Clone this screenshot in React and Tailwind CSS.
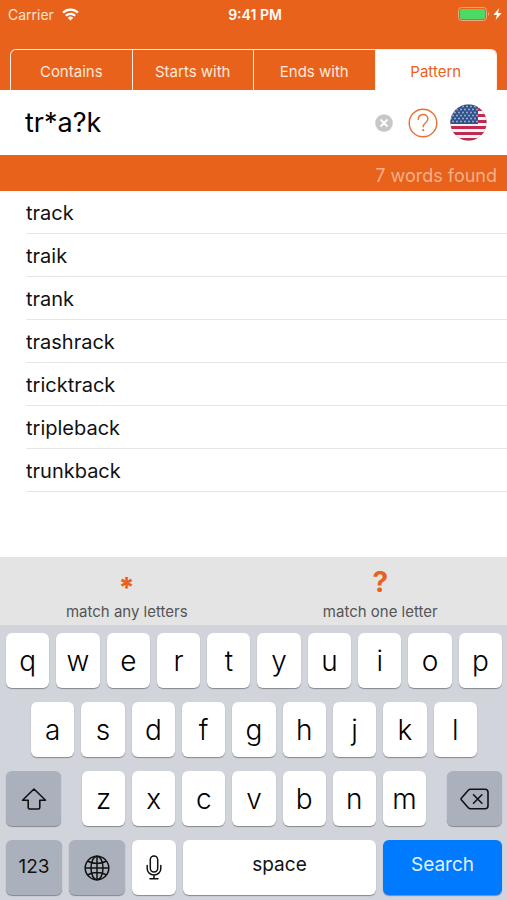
import { useState } from 'react'

const TABS = ['Contains', 'Starts with', 'Ends with', 'Pattern']
const WORDS = ['track', 'traik', 'trank', 'trashrack', 'tricktrack', 'tripleback', 'trunkback']
const STRIPES = [4, 10, 16, 22, 28, 34]

const KEY = 'h-[55px] min-w-0 rounded-md flex items-center justify-center shadow-[0_1px_1px_#85888d]'

function StatusBar() {
  return (
    <div className="grid h-7 grid-cols-3 items-center pl-2 pr-[5px] text-[14px] text-white">
      <div className="flex items-center gap-2">
        <span className="text-[#ffe3d2]">Carrier</span>
        <svg width="17" height="13" viewBox="0 0 17 13" fill="none" stroke="currentColor" strokeWidth="2.2">
          <path d="M1 4.6a10.8 10.8 0 0 1 15 0" />
          <path d="M3.8 7.7a6.8 6.8 0 0 1 9.4 0" />
          <path d="M8.5 12.6 5.8 9.9a3.9 3.9 0 0 1 5.4 0z" fill="currentColor" stroke="none" />
        </svg>
      </div>
      <span className="text-center font-semibold">9:41 PM</span>
      <div className="flex items-center justify-end gap-[3px]">
        <svg width="32" height="14" viewBox="0 0 32 14">
          <rect x="0.5" y="0.5" width="28" height="13" rx="3" fill="none" stroke="#f6a27a" />
          <rect x="2" y="2" width="25" height="10" rx="1.5" fill="#4cd964" />
          <path d="M30 5v4c1.6-.6 1.6-3.4 0-4z" fill="#f6a27a" />
        </svg>
        <svg width="9" height="12" viewBox="0 0 9 12" fill="currentColor">
          <path d="M6.2 0 .4 7h3.500L2.600 12 8.700 4.900H5z" />
        </svg>
      </div>
    </div>
  )
}

function Flag() {
  return (
    <svg width="37" height="37" viewBox="0 0 37 37">
      <clipPath id="flag-round">
        <circle cx="18.5" cy="18.5" r="18" />
      </clipPath>
      <g clipPath="url(#flag-round)">
        <rect width="37" height="37" fill="#f6f3f5" />
        {STRIPES.map((y) => (
          <rect key={y} y={y} width="37" height="3" fill="#bf2a50" />
        ))}
        <rect width="28" height="20" fill="#2f5189" />
        {[2, 5, 8, 11, 14, 17].map((y, row) =>
          [1, 5, 9, 13, 17, 21, 25].map((x) => (
            <circle key={`${x}-${y}`} cx={x + (row % 2) * 2} cy={y + 0.5} r="0.9" fill="#a9bbd8" />
          ))
        )}
      </g>
      <circle cx="18.5" cy="18.5" r="18" fill="none" stroke="#000000" strokeOpacity="0.12" />
    </svg>
  )
}

function Letters({ row, onType }) {
  return row.split('').map((letter) => (
    <button
      key={letter}
      type="button"
      onClick={() => onType(letter)}
      className={`${KEY} flex-1 bg-white text-[28px] font-light text-black`}
    >
      {letter}
    </button>
  ))
}

function Keyboard({ onType, onDelete }) {
  return (
    <div className="flex flex-col gap-[14px] bg-[#d1d4da] pt-2 pr-[5px] pb-[5px] pl-[6px]">
      <div className="flex gap-[7px]">
        <Letters row="qwertyuiop" onType={onType} />
      </div>
      <div className="flex gap-[7px] px-[25px]">
        <Letters row="asdfghjkl" onType={onType} />
      </div>
      <div className="flex gap-[21px]">
        <button type="button" aria-label="Shift" className={`${KEY} w-[55px] bg-[#abb1bc]`}>
          <svg width="26" height="24" viewBox="0 0 26 24" fill="none" stroke="#111" strokeWidth="1.6" strokeLinejoin="round">
            <path d="M13 2 1.5 13.2h5.700V20.500q0 1.500 1.500 1.500h8.600q1.500 0 1.500-1.500V13.200h5.700z" />
          </svg>
        </button>
        <div className="flex min-w-0 flex-1 gap-[7px]">
          <Letters row="zxcvbnm" onType={onType} />
        </div>
        <button type="button" aria-label="Delete" onClick={onDelete} className={`${KEY} w-[55px] bg-[#abb1bc]`}>
          <svg width="30" height="22" viewBox="0 0 30 22" fill="none" stroke="#111" strokeWidth="1.6" strokeLinejoin="round" strokeLinecap="round">
            <path d="M10.5 1.2H25q3 0 3 3v13.6q0 3-3 3H10.500q-1.300 0-2.200-1L1.500 12q-.8-1 0-2l6.800-7.800q.9-1 2.200-1z" />
            <path d="m13.5 6.800 8.400 8.400m0-8.400-8.400 8.400" />
          </svg>
        </button>
      </div>
      <div className="flex gap-[7px]">
        <button type="button" className={`${KEY} w-14 bg-[#abb1bc] text-[19px]`}>123</button>
        <button type="button" aria-label="Next keyboard" className={`${KEY} w-14 bg-[#abb1bc]`}>
          <svg width="26" height="26" viewBox="0 0 26 26" fill="none" stroke="#111" strokeWidth="1.5">
            <circle cx="13" cy="13" r="11.8" />
            <ellipse cx="13" cy="13" rx="6" ry="11.8" />
            <path d="M13 1.2v23.600M1.200 13h23.600M3.800 6.200q9.200 4.400 18.400 0M3.800 19.800q9.200-4.400 18.400 0" />
          </svg>
        </button>
        <button type="button" aria-label="Dictate" className={`${KEY} w-11 bg-white`}>
          <svg width="16" height="25" viewBox="0 0 16 25" fill="none" stroke="#111" strokeWidth="1.5" strokeLinecap="round">
            <rect x="4.3" y="1" width="7.4" height="16" rx="3.7" />
            <path d="M1.200 10.500v3.200a6.800 6.300 0 0 0 13.600 0v-3.200M8 20v3.500M4 23.800h8" />
          </svg>
        </button>
        <button type="button" onClick={() => onType(' ')} className={`${KEY} flex-1 bg-white pb-1 text-[19px]`}>
          space
        </button>
        <button type="submit" form="search" className={`${KEY} w-[119px] bg-[#007aff] pb-1 text-[19px] text-[#e3f0ff]`}>
          Search
        </button>
      </div>
    </div>
  )
}

export default function App() {
  const [tab, setTab] = useState('Pattern')
  const [query, setQuery] = useState('tr*a?k')

  const type = (char) => setQuery((q) => q + char)

  return (
    <div className="flex min-h-screen flex-col bg-white font-['Inter','Liberation_Sans',sans-serif] text-[#111]">
      <header className="bg-[#e8621b]">
        <StatusBar />
        <nav className="mx-[10px] mt-[21px] flex h-[41px] overflow-hidden rounded-t-md border border-b-0 border-[#fff0e6]">
          {TABS.map((name) => (
            <button
              key={name}
              type="button"
              onClick={() => setTab(name)}
              className={`flex-1 border-r border-[#fff0e6] pt-1 text-[15px] last:border-r-0 ${
                tab === name ? 'bg-white text-[#e8621b]' : 'text-[#ffe9dc]'
              }`}
            >
              {name}
            </button>
          ))}
        </nav>
      </header>

      <form id="search" onSubmit={(e) => e.preventDefault()} className="flex h-[65px] items-center pr-5 pl-[25px]">
        <input
          type="text"
          aria-label="Pattern"
          value={query}
          onChange={(e) => setQuery(e.target.value)}
          className="min-w-0 flex-1 pt-[2px] text-[27px] text-black outline-none"
        />
        <button type="button" aria-label="Clear" onClick={() => setQuery('')}>
          <svg width="18" height="18" viewBox="0 0 18 18">
            <circle cx="9" cy="9" r="8.8" fill="#c7c7c9" />
            <path d="m5.5 5.5 7 7m0-7-7 7" stroke="#fff" strokeWidth="1.8" />
          </svg>
        </button>
        <button type="button" aria-label="Help" className="ml-[15px]">
          <svg width="30" height="30" viewBox="0 0 30 30" fill="none" stroke="#e8703a" strokeWidth="1.4">
            <circle cx="15" cy="15" r="13.8" />
            <path d="M10.300 11.500c0-6.500 9.600-6.500 9.600-.7 0 3.900-4.700 4-4.700 8" strokeLinecap="round" />
            <circle cx="15.200" cy="22.200" r="1.100" fill="#e8703a" stroke="none" />
          </svg>
        </button>
        <button type="button" aria-label="Language: American English" className="ml-3">
          <Flag />
        </button>
      </form>

      <p className="h-9 bg-[#e8621b] pt-[3px] pr-[10px] text-right text-[18px] leading-9 text-[#f7b08a]">
        {WORDS.length} words found
      </p>

      <ul className="pl-[26px]">
        {WORDS.map((word) => (
          <li key={word} className="h-[43px] border-b border-[#e6e6e8] text-[20px] leading-[44px]">
            {word}
          </li>
        ))}
      </ul>

      <div className="mt-auto">
        <div className="grid h-[68px] grid-cols-2 bg-[#e4e4e4]">
          <button type="button" onClick={() => type('*')} className="flex flex-col items-center pt-[9px]">
            <span className="h-9 text-[28px] leading-[44px] font-extrabold text-[#e8621b]">*</span>
            <span className="text-[15px] leading-5 text-[#555]">match any letters</span>
          </button>
          <button type="button" onClick={() => type('?')} className="flex flex-col items-center pt-[9px]">
            <span className="h-9 text-[28px] leading-8 font-bold text-[#e8621b]">?</span>
            <span className="text-[15px] leading-5 text-[#555]">match one letter</span>
          </button>
        </div>
        <Keyboard onType={type} onDelete={() => setQuery((q) => q.slice(0, -1))} />
      </div>
    </div>
  )
}
